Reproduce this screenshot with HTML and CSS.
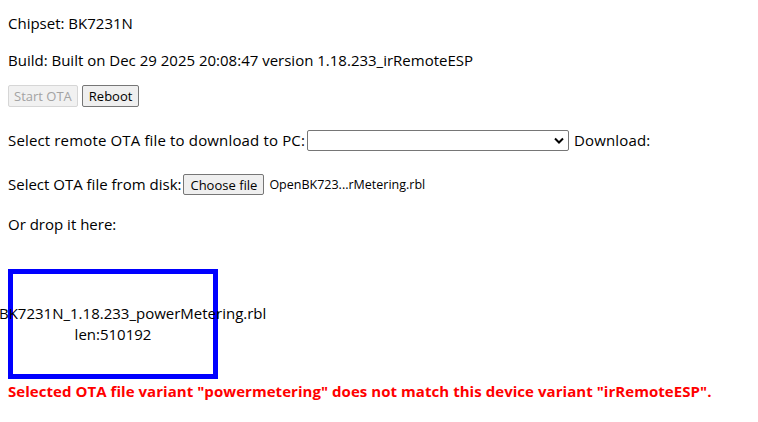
FILE: index.html
```html
<!DOCTYPE html>
<html>
<head>
<meta charset="utf-8">
<link rel="stylesheet" href="styles.css">
</head>
<body>
<div class="page">
  <p class="line chipset">Chipset: BK7231N</p>
  <p class="line build">Build: Built on Dec 29 2025 20:08:47 version 1.18.233_irRemoteESP</p>
  <div class="actions">
    <button class="btn" disabled>Start OTA</button>
    <button class="btn">Reboot</button>
  </div>
  <div class="line row remote">Select remote OTA file to download to PC:<span class="select"><svg class="chev" width="10" height="7" viewBox="0 0 10 7"><path d="M1 1.5 L5 5.5 L9 1.5" fill="none" stroke="#000" stroke-width="2"/></svg></span>Download:</div>
  <div class="line row disk">Select OTA file from disk:<button class="btn choose">Choose file</button><span class="fname">OpenBK723...rMetering.rbl</span></div>
  <p class="line drophint">Or drop it here:</p>
  <div class="drop">
    <div class="dropname">BK7231N_1.18.233_powerMetering.rbl</div>
    <div class="droplen">len:510192</div>
  </div>
  <div class="error">Selected OTA file variant "powermetering" does not match this device variant "irRemoteESP".</div>
</div>
</body>
</html>
```
FILE: styles.css
```css
html, body {
  margin: 0;
  padding: 0;
  background: #fff;
}
.page {
  display: flex;
  flex-direction: column;
  align-items: flex-start;
  padding: 0 8px;
  font-family: "Open Sans", "Noto Sans", sans-serif;
  font-size: 15px;
  color: #000;
}
.line {
  margin: 0;
  line-height: 21px;
  height: 21px;
  white-space: nowrap;
}
.chipset { margin-top: 13px; }
.build { margin-top: 16px; }
.actions {
  display: flex;
  gap: 4px;
  margin-top: 14px;
}
.remote { margin-top: 23px; letter-spacing: 0.15px; }
.disk { margin-top: 23px; }
.drophint { margin-top: 19px; }
.row {
  display: flex;
  align-items: center;
}
.btn {
  font-family: "Open Sans", "Noto Sans", sans-serif;
  font-size: 13px;
  height: 22px;
  padding: 0 6px;
  border: 1px solid #767676;
  border-radius: 2px;
  background: #efefef;
  color: #000;
  letter-spacing: 0;
}
.btn:disabled {
  padding: 0 5px;
  color: #a3a3a3;
  border-color: #d6d6d6;
  background: #f1f1f1;
}
.select {
  display: inline-flex;
  justify-content: flex-end;
  align-items: center;
  width: 262px;
  height: 21px;
  box-sizing: border-box;
  border: 1px solid #767676;
  border-radius: 2px;
  margin: 0 5px 0 2px;
  padding-right: 4px;
  background: #fff;
}
.chev { display: block; }
.choose {
  height: 21px;
  margin-left: 2px;
  padding: 0 6px;
}
.fname {
  font-size: 12.5px;
  margin-left: 5px;
}
.drop {
  width: 200px;
  height: 100px;
  border: 5px solid #0000ff;
  margin-top: 34px;
  display: flex;
  flex-direction: column;
  justify-content: center;
  align-items: center;
  white-space: nowrap;
  line-height: 21px;
}
.dropname {
  align-self: flex-start;
  margin-left: -14px;
}
.error {
  margin-top: 2px;
  color: #ff0000;
  font-weight: bold;
  line-height: 21px;
  white-space: nowrap;
  letter-spacing: 0.05px;
}
```
